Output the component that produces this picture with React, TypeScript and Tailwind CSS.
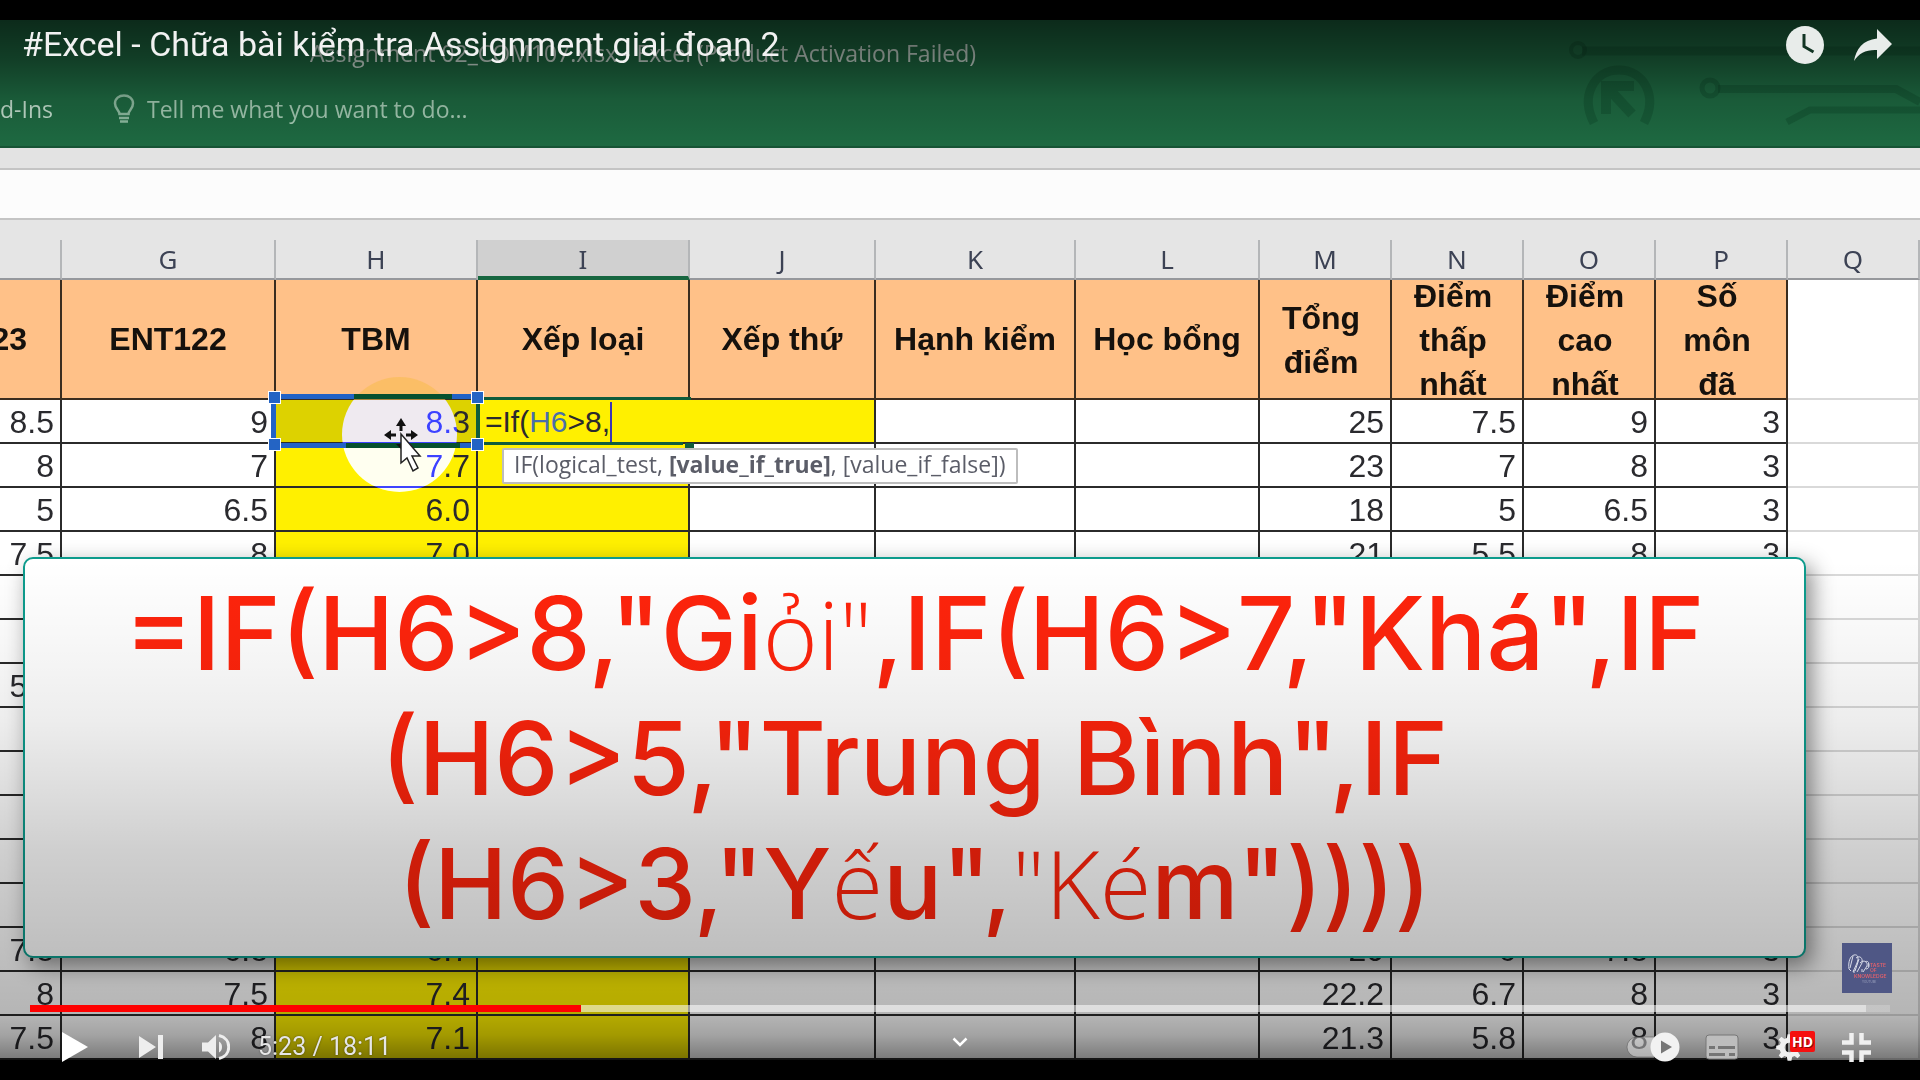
import React from "react";

type RowData = { f: string; g: string; h: string; m: string; n: string; o: string; p: string };

const row = (f = "", g = "", h = "", m = "", n = "", o = "", p = ""): RowData => ({ f, g, h, m, n, o, p });

const ROWS: RowData[] = [
  row("8.5", "9", "8.3", "25", "7.5", "9", "3"),
  row("8", "7", "7.7", "23", "7", "8", "3"),
  row("5", "6.5", "6.0", "18", "5", "6.5", "3"),
  row("7.5", "8", "7.0", "21", "5.5", "8", "3"),
  row(),
  row(),
  row("5.5"),
  row(),
  row(),
  row(),
  row(),
  row(),
  row("7.8", "6.8", "6.7", "20", "6", "7.8", "3"),
  row("8", "7.5", "7.4", "22.2", "6.7", "8", "3"),
  row("7.5", "8", "7.1", "21.3", "5.8", "8", "3"),
];

const LETTERS = ["", "G", "H", "I", "J", "K", "L", "M", "N", "O", "P", "Q"];

const TITLES: string[][] = [
  ["ENT122"],
  ["TBM"],
  ["Xếp loại"],
  ["Xếp thứ"],
  ["Hạnh kiểm"],
  ["Học bổng"],
  ["Tổng", "điểm"],
  ["Điểm", "thấp", "nhất"],
  ["Điểm", "cao", "nhất"],
  ["Số", "môn", "đã"],
];

const CELL = "h-11 border-r-2 border-b-2 border-[#2b2b2b] p-0 pt-[2px] pr-[6px] text-right";

function Circuit() {
  return (
    <svg className="absolute top-0 right-0" width="360" height="127" viewBox="0 0 360 127" fill="none" stroke="#0b3a22" strokeOpacity="0.3" aria-hidden="true">
      <path d="M22 31H360" strokeWidth="9" />
      <circle cx="18" cy="30" r="7" strokeWidth="4" />
      <path d="M34 103C20 76 34 50 59 50S98 76 84 103" strokeWidth="9" />
      <path d="M74 66H46V94M47 67L72 94" strokeWidth="10" />
      <circle cx="150" cy="68" r="8" strokeWidth="5" />
      <path d="M158 69H336L360 82" strokeWidth="8" />
      <path d="M227 102L250 90H360" strokeWidth="7" />
    </svg>
  );
}

function Pointer() {
  return (
    <svg className="absolute top-[18px] left-[108px] z-20" width="38" height="56" viewBox="0 0 38 56" aria-hidden="true">
      <path d="M17 0l5 8h-3.500v5h-3V8H12zM0 17l7-5v3.500h5v3H7V22zM34 17l-7-5v3.500h-5v3h5V22zM17 31l-5-5h10z" fill="#111" />
      <path d="M17 16V45l6-5 6 13 5-3-6-12h8z" fill="#fff" stroke="#222" strokeWidth="1.500" />
    </svg>
  );
}

function Selection() {
  const handle = "absolute size-[13px] border border-white bg-[#2464c4]";
  return (
    <>
      <span className="absolute -top-[23px] left-[66px] size-[115px] overflow-hidden rounded-full">
        <span className="block h-[23px] bg-[#f8bc50]/60" />
        <span className="block h-[92px] bg-[#1218f0] mix-blend-plus-lighter" />
      </span>
      <span className="absolute -top-[6px] -right-[4px] -bottom-[6px] -left-[5px] z-10 border-[5px] border-r-4 border-[#2162c6] border-r-[#0f5c3c]">
        <span className="absolute -top-[5px] right-6 h-[5px] w-[98px] bg-[#06502f]" />
        <span className="absolute right-4 -bottom-[5px] h-[5px] w-[114px] bg-[#06502f]" />
        <span className={handle + " -top-[8px] -left-[8px]"} />
        <span className={handle + " -top-[8px] -right-[8px]"} />
        <span className={handle + " -bottom-[8px] -left-[8px]"} />
        <span className={handle + " -right-[8px] -bottom-[8px]"} />
      </span>
      <Pointer />
    </>
  );
}

function FormulaCell() {
  return (
    <>
      <span className="absolute -top-[3px] left-0 h-[3px] w-[213px] bg-[#0f5c3c]" />
      <span className="absolute top-[42px] left-0 h-[3px] w-[205px] bg-[#0f5c3c]" />
      <span className="absolute top-[43px] left-[207px] h-[5px] w-[9px] bg-[#0f5c3c]" />
      <span role="textbox" aria-label="I6" className="flex h-[42px] items-center pt-[2px] pl-[7px] text-[30px] leading-10">
        =If(<span className="text-[#4a6fa8]">H6</span>&gt;8,
        <span className="h-10 w-[2px] bg-[#3b36b8]" />
      </span>
      <span role="tooltip" className="absolute top-[48px] left-6 z-20 rounded-xs border-2 border-[#bdbdbd] bg-white px-[10px] pb-1 font-['Open_Sans','Noto_Sans',sans-serif] text-[23px] leading-7 whitespace-nowrap text-[#5b5d68]">
        IF(logical_test, <b>[value_if_true]</b>, [value_if_false])
      </span>
    </>
  );
}

function Sheet() {
  return (
    <table className="w-full table-fixed border-separate border-spacing-0 bg-white font-['Liberation_Sans',Arial,sans-serif] text-[32px] leading-10 text-[#2a2a2e]">
      <colgroup>
        <col className="w-[62px]" />
        <col className="w-[214px]" />
        <col className="w-[202px]" />
        <col className="w-[212px]" />
        <col className="w-[186px]" />
        <col className="w-[200px]" />
        <col className="w-[184px]" />
        <col className="w-[132px]" />
        <col className="w-[132px]" />
        <col className="w-[132px]" />
        <col className="w-[132px]" />
        <col />
      </colgroup>
      <thead>
        <tr className="bg-[#e5e5e5] font-['Noto_Sans','Open_Sans',sans-serif] text-[26px] text-[#3c4254]">
          {LETTERS.map((l, i) => (
            <th
              key={i}
              scope="col"
              className={
                l === "I"
                  ? "h-10 border-r-2 border-b-4 border-r-[#b4b6b8] border-b-[#17663f] bg-[#d0d0d0] p-0 pt-[2px] leading-[34px] font-normal"
                  : "h-10 border-r-2 border-b-2 border-r-[#b4b6b8] border-b-[#96989c] p-0 leading-[38px] font-normal"
              }
            >
              {l}
            </th>
          ))}
        </tr>
      </thead>
      <tbody>
        <tr className="bg-[#ffc188] font-bold text-[#15110d]">
          <td className="h-[120px] border-r-2 border-b-2 border-[#3a2d1f] p-0">
            <div className="flex w-[27px] justify-end overflow-hidden">23</div>
          </td>
          {TITLES.map((t, i) => (
            <td key={i} className="h-[120px] border-r-2 border-b-2 border-[#3a2d1f] p-0 text-center leading-[44px]">
              <div className={t.length > 1 ? "flex h-[118px] flex-col justify-center overflow-hidden pt-[2px] pr-2" : "whitespace-nowrap"}>
                {t.map((s) => (
                  <span key={s} className="block">{s}</span>
                ))}
              </div>
            </td>
          ))}
          <td className="border-r-2 border-b-2 border-[#d9d9d9] bg-white" />
        </tr>
        {ROWS.map((r, i) => (
          <tr key={i}>
            <td className={CELL}>
              <div className="flex justify-end overflow-hidden">{r.f}</div>
            </td>
            <td className={CELL}>{r.g}</td>
            <td className={CELL + (i === 0 ? " relative bg-[#ddd200]" : " bg-[#fff000]")}>
              {r.h}
              {i === 0 && <Selection />}
            </td>
            {i === 0 ? (
              <td className="relative h-11 border-b-2 border-[#2b2b2b] bg-[#fff000] p-0">
                <FormulaCell />
              </td>
            ) : (
              <td className={CELL + " bg-[#fff000]"} />
            )}
            <td className={CELL + (i === 0 ? " bg-[#fff000]" : "")} />
            <td className={CELL} />
            <td className={CELL} />
            <td className={CELL}>{r.m}</td>
            <td className={CELL}>{r.n}</td>
            <td className={CELL}>{r.o}</td>
            <td className={CELL}>{r.p}</td>
            <td className="border-r-2 border-b-2 border-[#d9d9d9]" />
          </tr>
        ))}
      </tbody>
    </table>
  );
}

function FormulaCard() {
  const thin = "font-['Open_Sans','Noto_Sans',sans-serif] font-light text-[94px]";
  return (
    <div className="absolute top-[537px] right-[114px] left-[23px] rounded-[10px] border-2 border-[#0d9b8c] bg-white pt-3 pb-[10px] text-center font-['Inter','Liberation_Sans',sans-serif] text-[102px] leading-[125px] font-medium whitespace-nowrap text-[#ff240c] shadow-[6px_8px_22px_rgba(0,0,0,0.45)]">
      <p className="h-[125px]">=IF(H6&gt;8,"Gi<span className={thin}>ỏi"</span>,IF(H6&gt;7,"Khá",IF</p>
      <p className="h-[125px]">(H6&gt;5,"Trung Bình",IF</p>
      <p className="h-[125px] text-[98px]">(H6&gt;3,"Y<span className={thin}>ế</span>u",<span className={thin}>"Ké</span>m"))))</p>
    </div>
  );
}

function ChannelMark() {
  return (
    <a href="#channel" aria-label="Taste of Knowledge" className="absolute right-7 bottom-[67px] block size-[50px] bg-[#4f5785]">
      <svg width="50" height="50" viewBox="0 0 50 50" fill="none" aria-hidden="true">
        <path d="M7 26c-1-7 1-13 5-14 4-1 5 3 3 8l-4 9M11 13l-3 12M14 15c4-3 7 0 6 5l-5 9M17 16l-4 12M18 20c4-4 8-1 7 3l-4 6M23 19c3-2 5 1 3 5M7 26l2 2M12 27v3M20 26v3M24 26c3 0 4-4 2-6" stroke="#d9dce9" strokeWidth="1" />
        <g fill="#e0606c" fontFamily="Inter, sans-serif" fontSize="5" fontWeight="600">
          <text x="28" y="24">TASTE</text>
          <text x="28" y="29">OF</text>
          <text x="12" y="35">KNOWLEDGE</text>
        </g>
        <text x="20" y="40" fill="#9aa0bd" fontFamily="Inter, sans-serif" fontSize="3">YOUTUBE</text>
      </svg>
    </a>
  );
}

function TopBar() {
  return (
    <div className="absolute inset-x-0 top-0 flex items-start justify-between pt-1 pr-7 pl-[22px]">
      <h1 className="font-['Roboto',sans-serif] text-[34px] leading-10 whitespace-nowrap text-[#f1f1f1]">
        <a href="#video">#Excel - Chữa bài kiểm tra Assignment giai đoạn 2</a>
      </h1>
      <div className="flex items-center gap-[30px] pt-[2px]">
        <button type="button" aria-label="Watch later">
          <svg width="38" height="38" viewBox="0 0 38 38" className="block">
            <circle cx="19" cy="19" r="19" fill="#e8ecea" />
            <path d="M18 8V20.500L27.500 26" stroke="#123524" strokeWidth="3" fill="none" />
          </svg>
        </button>
        <button type="button" aria-label="Share">
          <svg width="38" height="32" viewBox="0 0 38 32" className="block">
            <path d="M23 0L38 15 23 30V21C12 20.500 5 24 0 32 2 20 9 11 23 9.500z" fill="#e8ecea" />
          </svg>
        </button>
      </div>
    </div>
  );
}

function Controls() {
  return (
    <div className="absolute inset-x-0 bottom-0 px-[30px] pb-px">
      <input
        type="range"
        aria-label="Seek"
        min={0}
        max={1091}
        defaultValue={323}
        className="block h-[7px] w-full appearance-none bg-[linear-gradient(to_right,#ff0000_29.6%,rgba(255,255,255,0.55)_29.6%,rgba(255,255,255,0.55)_98.7%,rgba(255,255,255,0.2)_98.7%)] [&::-webkit-slider-thumb]:size-0 [&::-webkit-slider-thumb]:appearance-none"
      />
      <div className="mt-[19px] grid h-7 grid-cols-[1fr_auto_1fr] items-center">
        <div className="flex items-center pl-8">
          <button type="button" aria-label="Play">
            <svg width="26" height="30" viewBox="0 0 26 30" className="block"><path d="M0 0L26 15 0 30z" fill="#fff" /></svg>
          </button>
          <button type="button" aria-label="Next" className="ml-[51px]">
            <svg width="24" height="24" viewBox="0 0 24 24" className="block"><path d="M0 1L17 12 0 23zM19 0h5v24h-5z" fill="#eee" /></svg>
          </button>
          <button type="button" aria-label="Mute" className="ml-[39px]">
            <svg width="28" height="28" viewBox="0 0 28 28" className="block">
              <path d="M0 9.500h6L14 2v24l-8-7.500H0z" fill="#eee" />
              <path d="M17 8.500c4 2 4 9 0 11z" fill="#eee" />
              <path d="M17 2.500C30 5.500 30 22.500 17 25.500" stroke="#eee" strokeWidth="3" fill="none" />
            </svg>
          </button>
          <span className="ml-7 font-['Roboto',sans-serif] text-[25px] leading-8 text-[#e6e6e6] [text-shadow:0_0_2px_rgba(0,0,0,0.5)]">5:23 / 18:11</span>
        </div>
        <button type="button" aria-label="More videos">
          <svg width="16" height="10" viewBox="0 0 16 10" className="mb-[10px] block"><path d="M1.500 1.500L8 8l6.500-6.500" stroke="#fff" strokeWidth="2.500" fill="none" /></svg>
        </button>
        <div className="flex items-center justify-end pr-[19px]">
          <button type="button" role="switch" aria-checked="true" aria-label="Autoplay">
            <svg width="54" height="30" viewBox="0 0 54 30" className="block">
              <rect x="1" y="5" width="44" height="20" rx="10" fill="#fff" fillOpacity="0.4" stroke="#555" strokeOpacity="0.5" />
              <circle cx="39" cy="15" r="14.500" fill="#f2f2f2" />
              <path d="M35 8.500L46 15 35 21.500z" fill="#777" />
            </svg>
          </button>
          <button type="button" aria-label="Subtitles" className="ml-[25px]">
            <svg width="34" height="26" viewBox="0 0 34 26" className="block">
              <rect x="1" y="1" width="32" height="24" rx="3" fill="#bdbdbd" stroke="#777" />
              <path d="M4 13.500h6M13 13.500h17M4 20.500h16M24 20.500h6" stroke="#757575" strokeWidth="3" />
            </svg>
          </button>
          <button type="button" aria-label="Settings" className="relative ml-9 w-10">
            <svg width="29" height="29" viewBox="0 0 24 24" className="block" fill="#f0f0f0">
              <path d="M23 13.500v-3l-3-.6a8 8 0 0 0-.8-2l1.700-2.500-2.200-2.200-2.500 1.700a8 8 0 0 0-2-.8L13.600 1h-3.200l-.6 3.100a8 8 0 0 0-2 .8L5.300 3.200 3.100 5.400l1.700 2.500a8 8 0 0 0-.8 2L1 10.500v3l3 .6a8 8 0 0 0 .8 2l-1.700 2.500 2.200 2.200 2.500-1.700a8 8 0 0 0 2 .8l.6 3.100h3.200l.6-3.100a8 8 0 0 0 2-.8l2.500 1.700 2.200-2.200-1.700-2.500a8 8 0 0 0 .8-2zM12 16a4 4 0 1 1 0-8 4 4 0 0 1 0 8z" fillRule="evenodd" />
            </svg>
            <span className="absolute -top-[2px] right-0 rounded-xs bg-[#f6100f] px-[2px] font-['Open_Sans',sans-serif] text-[14px] leading-[21px] font-bold text-white [text-shadow:1px_1px_0_#8c0808]">HD</span>
          </button>
          <button type="button" aria-label="Exit full screen" className="ml-[27px]">
            <svg width="29" height="29" viewBox="0 0 29 29" className="block" stroke="#f0f0f0" strokeWidth="4.500" fill="none">
              <path d="M0 9.500H9.500V0M19.500 0V9.500H29M0 19.500H9.500V29M19.500 29V19.500H29" />
            </svg>
          </button>
        </div>
      </div>
    </div>
  );
}

export default function App() {
  return (
    <div className="w-full overflow-hidden bg-black py-5">
      <main className="relative">
        <header className="relative flex flex-col border-b-2 border-[#175435] bg-[#1e6a42] font-['Open_Sans','Noto_Sans',sans-serif]">
          <Circuit />
          <p className="pt-[13px] pl-[310px] text-[23px] leading-10 whitespace-nowrap text-[#cfe0d6]">Assignment 02_COM107.xlsx - Excel (Product Activation Failed)</p>
          <div className="flex items-center pt-[19px] pb-5 text-[23px] leading-[34px] text-[#a5cbb4]">
            <span className="w-[113px] text-[#c3dfce]">d-Ins</span>
            <svg width="22" height="30" viewBox="0 0 22 30" fill="none" stroke="#8fbda2" strokeWidth="2.500" className="mr-3" aria-hidden="true">
              <path d="M6.500 20C6.500 16 2 15 2 9.500 2 4.500 6 1.500 11 1.500s9 3 9 8c0 5.500-4.500 6.500-4.500 10.500z" />
              <path d="M6 24h10M7 27.500h8" />
            </svg>
            <button type="button">Tell me what you want to do...</button>
          </div>
        </header>
        <div className="h-5 bg-[#e3e3e3]" />
        <div className="h-[52px] border-y-2 border-[#c4c4c4] bg-[#fcfcfc]" />
        <div className="h-5 bg-[#e5e5e5]" />
        <Sheet />
        <FormulaCard />
        <div className="pointer-events-none absolute inset-x-0 top-0 h-[128px] bg-[linear-gradient(rgba(0,0,0,0.6),rgba(0,0,0,0.42)_30%,rgba(0,0,0,0.15)_62%,transparent)]" />
        <div className="pointer-events-none absolute inset-x-0 bottom-0 h-[500px] bg-[linear-gradient(transparent,rgba(0,0,0,0.03)_16%,rgba(0,0,0,0.07)_32%,rgba(0,0,0,0.14)_48%,rgba(0,0,0,0.19)_58%,rgba(0,0,0,0.25)_78%,rgba(0,0,0,0.29)_91%,rgba(0,0,0,0.36)_95%,rgba(0,0,0,0.53))]" />
        <TopBar />
        <ChannelMark />
        <Controls />
      </main>
    </div>
  );
}
